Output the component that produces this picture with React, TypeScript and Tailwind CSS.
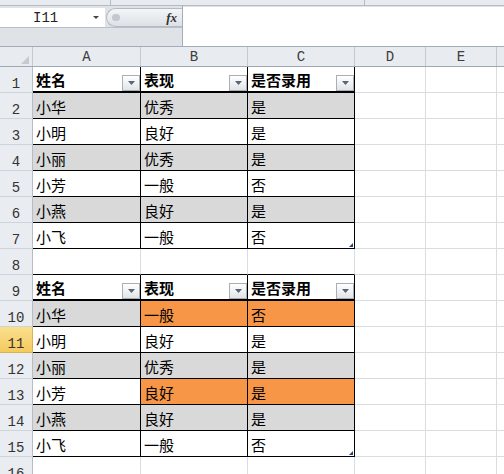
import React from 'react';

type Fill = 'white' | 'gray' | 'orange';

type Row =
  | { n: number; kind: 'head' }
  | { n: number; kind: 'data'; cells: [string, Fill][]; last?: boolean }
  | { n: number; kind: 'gap' }
  | { n: number; kind: 'empty' };

const cjk = "font-['Noto_Sans_CJK_SC',sans-serif]";
const mono = "font-['Liberation_Mono',monospace]";

const tableWidths = ['w-[108px]', 'w-[107px]', 'w-[107px]'];
const fills: Record<Fill, string> = {
  white: 'bg-white',
  gray: 'bg-[#d9d9d9]',
  orange: 'bg-[#f79646]',
};
const headers = ['姓名', '表现', '是否录用'];

const rows: Row[] = [
  { n: 1, kind: 'head' },
  { n: 2, kind: 'data', cells: [['小华', 'gray'], ['优秀', 'gray'], ['是', 'gray']] },
  { n: 3, kind: 'data', cells: [['小明', 'white'], ['良好', 'white'], ['是', 'white']] },
  { n: 4, kind: 'data', cells: [['小丽', 'gray'], ['优秀', 'gray'], ['是', 'gray']] },
  { n: 5, kind: 'data', cells: [['小芳', 'white'], ['一般', 'white'], ['否', 'white']] },
  { n: 6, kind: 'data', cells: [['小燕', 'gray'], ['良好', 'gray'], ['是', 'gray']] },
  { n: 7, kind: 'data', cells: [['小飞', 'white'], ['一般', 'white'], ['否', 'white']], last: true },
  { n: 8, kind: 'gap' },
  { n: 9, kind: 'head' },
  { n: 10, kind: 'data', cells: [['小华', 'gray'], ['一般', 'orange'], ['否', 'orange']] },
  { n: 11, kind: 'data', cells: [['小明', 'white'], ['良好', 'white'], ['是', 'white']] },
  { n: 12, kind: 'data', cells: [['小丽', 'gray'], ['优秀', 'gray'], ['是', 'gray']] },
  { n: 13, kind: 'data', cells: [['小芳', 'white'], ['良好', 'orange'], ['是', 'orange']] },
  { n: 14, kind: 'data', cells: [['小燕', 'gray'], ['良好', 'gray'], ['是', 'gray']] },
  { n: 15, kind: 'data', cells: [['小飞', 'white'], ['一般', 'white'], ['否', 'white']], last: true },
  { n: 16, kind: 'empty' },
];

function FilterButton() {
  return (
    <div className="w-[18px] h-[16px] self-end shrink-0 border border-[#a9afb7] bg-linear-to-b from-white to-[#e1e4e8] flex items-center justify-center">
      <svg width="7" height="4" viewBox="0 0 7 4">
        <polygon points="0,0 7,0 3.5,4" fill="#5b6470" />
      </svg>
    </div>
  );
}

function RowHeader({ n }: { n: number }) {
  const selected = n === 11;
  return (
    <div
      className={`w-[33px] shrink-0 border-r border-b flex items-end justify-center pb-[1px] text-[14px] leading-none text-[#333] ${mono} ${
        selected
          ? 'bg-linear-to-b from-[#fadf8c] to-[#f5ca5c] border-[#dcb056]'
          : 'bg-[#e9ecf0] border-r-[#b7bdc6] border-b-[#cfd4da]'
      }`}
    >
      {n}
    </div>
  );
}

function GridTail() {
  return (
    <>
      <div className="w-[71px] shrink-0 border-r border-b border-[#d9dce0]" />
      <div className="w-[71px] shrink-0 border-r border-b border-[#d9dce0]" />
      <div className="flex-1 border-b border-[#d9dce0]" />
    </>
  );
}

function SheetRow({ row }: { row: Row }) {
  return (
    <div className="flex h-[26px] shrink-0">
      <RowHeader n={row.n} />
      {row.kind === 'head' &&
        headers.map((h, i) => (
          <div
            key={h}
            className={`${tableWidths[i]} shrink-0 border-r border-b-2 border-black bg-white flex items-center justify-between pl-[3px] font-bold text-[15px] leading-none text-black ${cjk}`}
          >
            <span className="pt-[1px]">{h}</span>
            <FilterButton />
          </div>
        ))}
      {row.kind === 'data' &&
        row.cells.map(([text, fill], i) => (
          <div
            key={i}
            className={`${tableWidths[i]} ${fills[fill]} relative shrink-0 border-r border-b border-black flex items-center pl-[3px] pt-[2px] text-[15px] leading-none text-black ${cjk}`}
          >
            {text}
            {row.last && i === 2 && (
              <svg className="absolute right-[1px] bottom-[1px]" width="4" height="4" viewBox="0 0 4 4">
                <polygon points="4,0 4,4 0,4" fill="#243f7a" />
              </svg>
            )}
          </div>
        ))}
      {row.kind === 'gap' &&
        tableWidths.map((w, i) => (
          <div key={i} className={`${w} shrink-0 border-r border-b border-r-[#d9dce0] border-b-black`} />
        ))}
      {row.kind === 'empty' &&
        tableWidths.map((w, i) => (
          <div key={i} className={`${w} shrink-0 border-r border-b border-[#d9dce0]`} />
        ))}
      <GridTail />
    </div>
  );
}

export default function App() {
  const cols: [string, string][] = [
    ['A', 'w-[108px]'],
    ['B', 'w-[107px]'],
    ['C', 'w-[107px]'],
    ['D', 'w-[71px]'],
    ['E', 'w-[71px]'],
  ];

  return (
    <div className="w-[504px] h-[474px] overflow-hidden bg-white flex flex-col">
      {/* ribbon bottom edge */}
      <div className="flex h-[6px] shrink-0 bg-[#e7eaee] border-b border-[#b4bbc4]">
        <div className="w-[111px] border-r border-[#b4bbc4]" />
        <div className="w-[254px] border-r border-[#b4bbc4]" />
      </div>

      {/* name box + formula bar */}
      <div className="flex h-[41px] shrink-0 bg-[#dfe3e8] border-b border-[#a3acb8]">
        <div className="w-[183px] shrink-0 flex flex-col border-r border-[#a3acb8]">
          <div className="h-[21px] flex pt-[2px]">
            <div className={`w-[105px] bg-white flex items-center pl-[33px] pr-[6px] text-[14px] text-[#222] ${mono}`}>
              <span className="flex-1 leading-none">I11</span>
              <svg width="6" height="3" viewBox="0 0 6 3">
                <polygon points="0,0 6,0 3,3" fill="#444" />
              </svg>
            </div>
            <div className="flex-1 ml-[1px] rounded-l-full border border-r-0 border-[#b3bac3] bg-linear-to-b from-[#f3f5f7] to-[#dde1e6] flex items-center justify-between pl-[5px] pr-[5px]">
              <div className="w-[8px] h-[7px] rounded-full bg-[#c3c8ce]" />
              <span className="font-['Liberation_Serif',serif] italic font-bold text-[13px] leading-none text-[#333]">fx</span>
            </div>
          </div>
          <div className="flex-1 border-t border-[#b9c0c9]" />
        </div>
        <div className="flex-1 bg-white mt-[1px]" />
      </div>

      {/* column headers */}
      <div className={`flex h-[20px] shrink-0 bg-[#e8ebef] border-b border-[#9ea9b6] text-[14px] leading-none text-[#3c3c3c] ${mono}`}>
        <div className="w-[33px] shrink-0 border-r border-[#c5cad1] flex items-end justify-end pr-[3px] pb-[2px]">
          <svg width="8" height="8" viewBox="0 0 8 8">
            <polygon points="8,0 8,8 0,8" fill="#c6cad0" />
          </svg>
        </div>
        {cols.map(([c, w]) => (
          <div key={c} className={`${w} shrink-0 border-r border-[#c5cad1] flex items-end justify-center pb-[2px]`}>
            {c}
          </div>
        ))}
        <div className="flex-1" />
      </div>

      {rows.map((r) => (
        <SheetRow key={r.n} row={r} />
      ))}
    </div>
  );
}
